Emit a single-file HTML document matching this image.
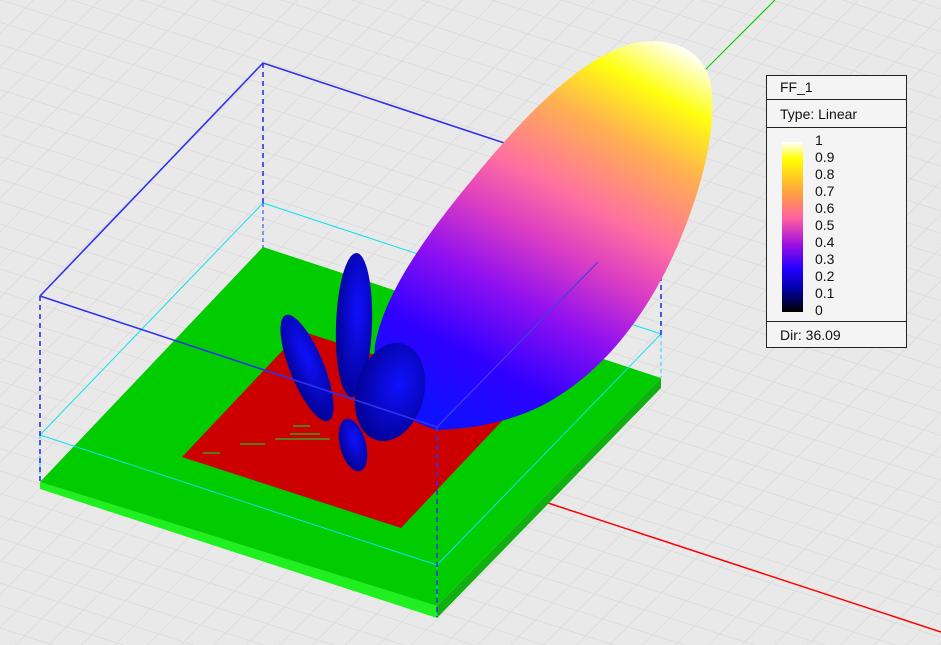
<!DOCTYPE html>
<html><head><meta charset="utf-8"><style>
html,body{margin:0;padding:0;}
body{width:941px;height:645px;overflow:hidden;background:#e9e9e9;position:relative;font-family:"Liberation Sans",sans-serif;}
#leg{position:absolute;left:766px;top:75px;width:139px;height:271px;background:#f4f4f4;border:1px solid #222;font-size:14px;color:#111;}
#leg .r{position:absolute;left:0;right:0;border-bottom:1px solid #222;padding-left:13px;box-sizing:border-box;}
#bar{position:absolute;left:15px;top:66px;width:21px;height:170px;background:linear-gradient(to bottom,#fff 0%,#ffff00 10%,#ffa040 30%,#ff60a0 45%,#a010e0 60%,#2000ff 75%,#0000a0 87%,#000 100%);}
.lb{position:absolute;left:48px;font-size:14px;line-height:14px;}
</style></head><body>
<svg width="941" height="645" style="position:absolute;left:0;top:0">
<defs>
<pattern id="g" width="100" height="100" patternUnits="userSpaceOnUse" patternTransform="matrix(0.25,0.08,0.17,-0.17,0,0)">
<path d="M0 0H100M0 0V100" stroke="#d4d4d4" stroke-width="5" fill="none"/>
</pattern>
<linearGradient id="lobe" x1="470" y1="430" x2="680" y2="45" gradientUnits="userSpaceOnUse">
<stop offset="0" stop-color="#1010ff"/><stop offset="0.15" stop-color="#3000ff"/><stop offset="0.32" stop-color="#9010f0"/><stop offset="0.47" stop-color="#e040c0"/><stop offset="0.58" stop-color="#ff70a0"/><stop offset="0.75" stop-color="#ffb050"/><stop offset="0.88" stop-color="#ffff10"/><stop offset="1" stop-color="#ffffff"/>
</linearGradient>
<radialGradient id="bl" cx="0.6" cy="0.4" r="0.7"><stop offset="0" stop-color="#1010ff"/><stop offset="1" stop-color="#00008a"/></radialGradient>
</defs>
<rect width="941" height="645" fill="url(#g)"/>
<line x1="700" y1="75" x2="775" y2="0" stroke="#10d010" stroke-width="1.2"/>
<line x1="548" y1="503" x2="941" y2="632" stroke="#ff0000" stroke-width="1.5"/>
<polygon points="40,482 437,606 437,618 40,489" fill="#20f020"/>
<polygon points="437,606 661,378 661,388 437,618" fill="#10b010"/>
<polygon points="263,247 661,378 437,606 40,482" fill="#00cc00"/>
<polygon points="301,331 520,402 401,528 182,457" fill="#cc0000"/>
<g stroke="#20c020" stroke-width="1.2"><line x1="203" y1="453" x2="220" y2="453"/><line x1="240" y1="444" x2="265" y2="444"/><line x1="275" y1="439" x2="330" y2="439"/><line x1="290" y1="434" x2="320" y2="434"/><line x1="293" y1="426" x2="310" y2="426"/></g>
<g stroke="#10e0f0" stroke-width="1" fill="none">
<polyline points="40,435 263,203 661,334 437,565 40,435"/>
<line x1="40" y1="435" x2="40" y2="482" stroke-dasharray="4 3"/>
<line x1="661" y1="334" x2="661" y2="378" stroke-dasharray="4 3"/>
<line x1="437" y1="565" x2="437" y2="617" stroke-dasharray="4 3"/>
</g>
<line x1="263" y1="203" x2="263" y2="248" stroke="#3030ff" stroke-dasharray="4 3"/>
<g stroke="#3030ee" stroke-width="1.6" fill="none">
<polyline points="40,296 263,63 661,195"/>
<line x1="263" y1="63" x2="263" y2="203" stroke-dasharray="5 4"/>
<line x1="40" y1="296" x2="40" y2="482" stroke-dasharray="5 4"/>
<line x1="661" y1="195" x2="661" y2="335" stroke-dasharray="5 4"/>
</g>
<ellipse cx="307" cy="368" rx="17" ry="57" transform="rotate(-22 307 368)" fill="url(#bl)"/>
<ellipse cx="354" cy="325" rx="18" ry="72" transform="rotate(2 354 325)" fill="url(#bl)"/>
<path d="M437,430 C400,420 370,390 375,345 C385,290 430,230 480,170 C530,110 580,60 630,44 C665,36 700,45 710,80 C718,120 705,180 680,240 C655,300 615,360 560,395 C530,415 490,428 437,430 Z" fill="url(#lobe)"/>
<ellipse cx="390" cy="392" rx="34" ry="50" transform="rotate(15 390 392)" fill="url(#bl)"/>
<ellipse cx="353" cy="445" rx="13" ry="27" transform="rotate(-15 353 445)" fill="url(#bl)"/>
<g stroke="#3030ee" stroke-width="1.6" fill="none">
<line x1="40" y1="296" x2="437" y2="427"/>
<line x1="437" y1="427" x2="598" y2="262" stroke="#4040e0" stroke-width="1.2"/>
<line x1="437" y1="427" x2="437" y2="617" stroke-dasharray="5 4"/>
</g>
</svg>
<div id="leg">
<div class="r" style="top:0;height:24px;line-height:23px;">FF_1</div>
<div class="r" style="top:24px;height:28px;line-height:28px;">Type: Linear</div>
<div id="bar"></div>
<div class="lb" style="top:57px">1</div>
<div class="lb" style="top:74px">0.9</div>
<div class="lb" style="top:91px">0.8</div>
<div class="lb" style="top:108px">0.7</div>
<div class="lb" style="top:125px">0.6</div>
<div class="lb" style="top:142px">0.5</div>
<div class="lb" style="top:159px">0.4</div>
<div class="lb" style="top:176px">0.3</div>
<div class="lb" style="top:193px">0.2</div>
<div class="lb" style="top:210px">0.1</div>
<div class="lb" style="top:227px">0</div>
<div class="r" style="top:245px;height:26px;line-height:26px;border-top:1px solid #222;border-bottom:none;">Dir: 36.09</div>
</div>
</body></html>
